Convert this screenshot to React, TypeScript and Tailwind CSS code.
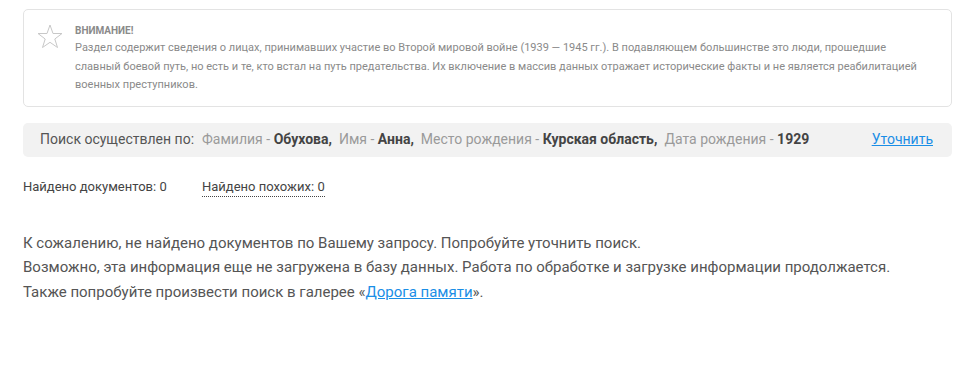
import React from 'react';

const font = { fontFamily: 'Roboto, "Noto Sans", sans-serif' };

const StarIcon = () => (
  <svg width="26" height="24" viewBox="0 0 26 24" className="shrink-0">
    <polygon
      points="13,1 16,9.5 25,9.5 17.8,15 20.5,23.5 13,18.3 5.5,23.5 8.2,15 1,9.5 10,9.5"
      fill="none"
      stroke="#c8c8c8"
      strokeWidth="1"
      strokeLinejoin="miter"
    />
  </svg>
);

const Term = ({ label, value, last }: { label: string; value: string; last?: boolean }) => (
  <span className="mr-[7px]">
    <span className="text-[#9a9a9a]">{label} - </span>
    <b className="font-bold text-[#444]">
      {value}
      {last ? '' : ','}
    </b>
  </span>
);

export default function App() {
  return (
    <div className="bg-white min-h-screen pl-[23px] pr-[15px] pt-[9px] text-[#555]" style={font}>
      <div className="flex gap-[12px] rounded-[5px] border border-[#e3e3e3] pl-[13px] pr-4 pt-[13px] pb-[11px]">
        <div className="pt-[1px]">
          <StarIcon />
        </div>
        <div>
          <div className="text-[10px] font-bold uppercase leading-[16px] text-[#8a8a8a]">Внимание!</div>
          <p className="max-w-[850px] text-[11px] leading-[18.5px] text-[#8a8a8a]">
            Раздел содержит сведения о лицах, принимавших участие во Второй мировой войне (1939 — 1945 гг.). В подавляющем
            большинстве это люди, прошедшие славный боевой путь, но есть и те, кто встал на путь предательства. Их включение в
            массив данных отражает исторические факты и не является реабилитацией военных преступников.
          </p>
        </div>
      </div>

      <div className="mt-[16px] flex items-center justify-between rounded-[5px] bg-[#f2f2f2] pl-[17px] pr-[19px] h-[34px] text-[14px]">
        <div className="text-[#555]">
          <span className="mr-[8px]">Поиск осуществлен по:</span>
          <Term label="Фамилия" value="Обухова" />
          <Term label="Имя" value="Анна" />
          <Term label="Место рождения" value="Курская область" />
          <Term label="Дата рождения" value="1929" last />
        </div>
        <a href="#" className="text-[#1a8ee6] underline">
          Уточнить
        </a>
      </div>

      <div className="mt-[21px] flex text-[13px] text-[#444] leading-[18px]">
        <span className="w-[179px]">Найдено документов: 0</span>
        <span className="border-b border-dotted border-[#444]">Найдено похожих: 0</span>
      </div>

      <div className="mt-[34px] text-[15px] leading-[24.5px] text-[#555]">
        <p>К сожалению, не найдено документов по Вашему запросу. Попробуйте уточнить поиск.</p>
        <p>Возможно, эта информация еще не загружена в базу данных. Работа по обработке и загрузке информации продолжается.</p>
        <p>
          Также попробуйте произвести поиск в галерее «
          <a href="#" className="text-[#1a8ee6] underline">
            Дорога памяти
          </a>
          ».
        </p>
      </div>
    </div>
  );
}
